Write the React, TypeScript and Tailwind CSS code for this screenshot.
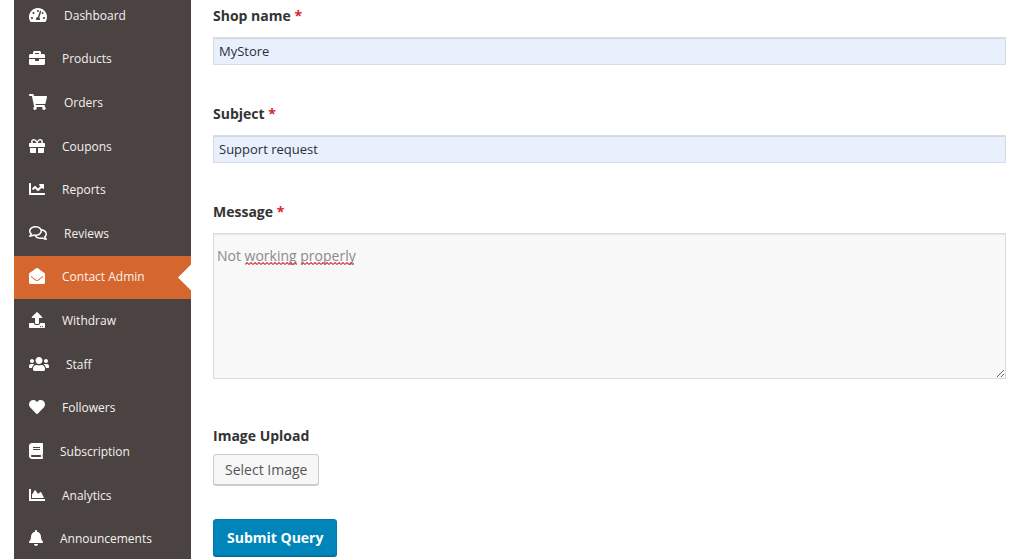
import type { IconType } from "react-icons";
import {
  FaBell,
  FaBook,
  FaBriefcase,
  FaChartArea,
  FaChartLine,
  FaEnvelopeOpen,
  FaGift,
  FaHeart,
  FaRegComments,
  FaShoppingCart,
  FaTachometerAlt,
  FaUpload,
  FaUsers,
} from "react-icons/fa";

const items: { label: string; icon: IconType; width: string; active?: boolean }[] = [
  { label: "Dashboard", icon: FaTachometerAlt, width: "w-[18px]" },
  { label: "Products", icon: FaBriefcase, width: "w-4" },
  { label: "Orders", icon: FaShoppingCart, width: "w-[18px]" },
  { label: "Coupons", icon: FaGift, width: "w-4" },
  { label: "Reports", icon: FaChartLine, width: "w-4" },
  { label: "Reviews", icon: FaRegComments, width: "w-[18px]" },
  { label: "Contact Admin", icon: FaEnvelopeOpen, width: "w-4", active: true },
  { label: "Withdraw", icon: FaUpload, width: "w-4" },
  { label: "Staff", icon: FaUsers, width: "w-5" },
  { label: "Followers", icon: FaHeart, width: "w-4" },
  { label: "Subscription", icon: FaBook, width: "w-3.5" },
  { label: "Analytics", icon: FaChartArea, width: "w-4" },
  { label: "Announcements", icon: FaBell, width: "w-3.5" },
];

function Sidebar() {
  return (
    <nav
      aria-label="Vendor dashboard"
      className="-mt-1.5 grid min-h-[567px] w-[177px] shrink-0 auto-rows-fr bg-[#4b4342]"
    >
      {items.map(({ label, icon: Icon, width, active }) => (
        <a
          key={label}
          href="#"
          aria-current={active ? "page" : undefined}
          className={`relative flex items-center gap-[17px] pl-[15px] text-xs leading-5 ${
            active ? "bg-[#d4662e] text-[#fdf3ec]" : "text-[#f3f1f0]"
          }`}
        >
          <Icon aria-hidden className={`mb-0.5 h-4 shrink-0 text-white ${width}`} />
          <span>{label}</span>
          {active && (
            <span className="absolute top-1/2 right-0 h-[26px] w-[13px] -translate-y-1/2 bg-white [clip-path:polygon(100%_0,100%_100%,0_50%)]" />
          )}
        </a>
      ))}
    </nav>
  );
}

function Label({ htmlFor, children }: { htmlFor: string; children: string }) {
  return (
    <label htmlFor={htmlFor} className="text-sm leading-5 font-bold text-[#333]">
      {children} <span className="text-[#d9252b]">*</span>
    </label>
  );
}

function TextField({ id, label, value }: { id: string; label: string; value: string }) {
  return (
    <div className="flex flex-col gap-[11px]">
      <Label htmlFor={id}>{label}</Label>
      <input
        id={id}
        type="text"
        required
        defaultValue={value}
        className="h-7 w-full border border-[#d9dce0] bg-[#e8f0fe] px-[5px] text-[13px] text-[#2b2f33] shadow-[inset_0_1px_1px_#d3d7dd]"
      />
    </div>
  );
}

function SpellingMark({ className }: { className: string }) {
  return (
    <svg aria-hidden className={`absolute h-[3px] ${className}`}>
      <defs>
        <pattern id="squiggle" width="4" height="3" patternUnits="userSpaceOnUse">
          <path d="M0 2.5 L2 .5 L4 2.5" fill="none" stroke="#d6404a" strokeWidth="1.1" />
        </pattern>
      </defs>
      <rect width="100%" height="3" fill="url(#squiggle)" />
    </svg>
  );
}

export default function App() {
  return (
    <div className="flex h-screen overflow-hidden bg-white pl-3.5 font-['Open_Sans','Noto_Sans',sans-serif]">
      <Sidebar />
      <form className="flex min-w-0 flex-1 flex-col pt-1.5 pr-[18px] pl-[22px]">
        <div className="flex flex-col gap-[39px]">
          <TextField id="shop-name" label="Shop name" value="MyStore" />
          <TextField id="subject" label="Subject" value="Support request" />
          <div className="flex flex-col gap-[11px]">
            <Label htmlFor="message">Message</Label>
            <div className="relative">
              <textarea
                id="message"
                required
                spellCheck={false}
                defaultValue="Not working properly"
                className="block h-[146px] w-full resize-y border border-[#d9dce0] bg-[#f8f8f8] px-[3px] pt-3 text-sm leading-5 text-[#8a8a8a] shadow-[inset_0_1px_1px_#e3e5e8]"
              />
              <SpellingMark className="top-[29px] left-8 w-[52px]" />
              <SpellingMark className="top-[29px] left-[88px] w-[53px]" />
            </div>
          </div>
        </div>
        <div className="mt-[47px] flex flex-col items-start gap-2">
          <span id="upload-label" className="text-sm leading-5 font-bold text-[#333]">
            Image Upload
          </span>
          <button
            type="button"
            aria-describedby="upload-label"
            className="h-[31px] rounded-[3px] border border-[#ccc] bg-[#f7f7f7] px-[11px] text-sm text-[#555] shadow-[0_1px_0_#ccc]"
          >
            Select Image
          </button>
        </div>
        <button
          type="submit"
          className="mt-[34px] h-[37px] shrink-0 self-start rounded-[3px] border border-[#0079ad] bg-[#0085ba] px-[13px] text-sm font-bold text-white shadow-[0_1px_0_#006799]"
        >
          Submit Query
        </button>
      </form>
    </div>
  );
}
